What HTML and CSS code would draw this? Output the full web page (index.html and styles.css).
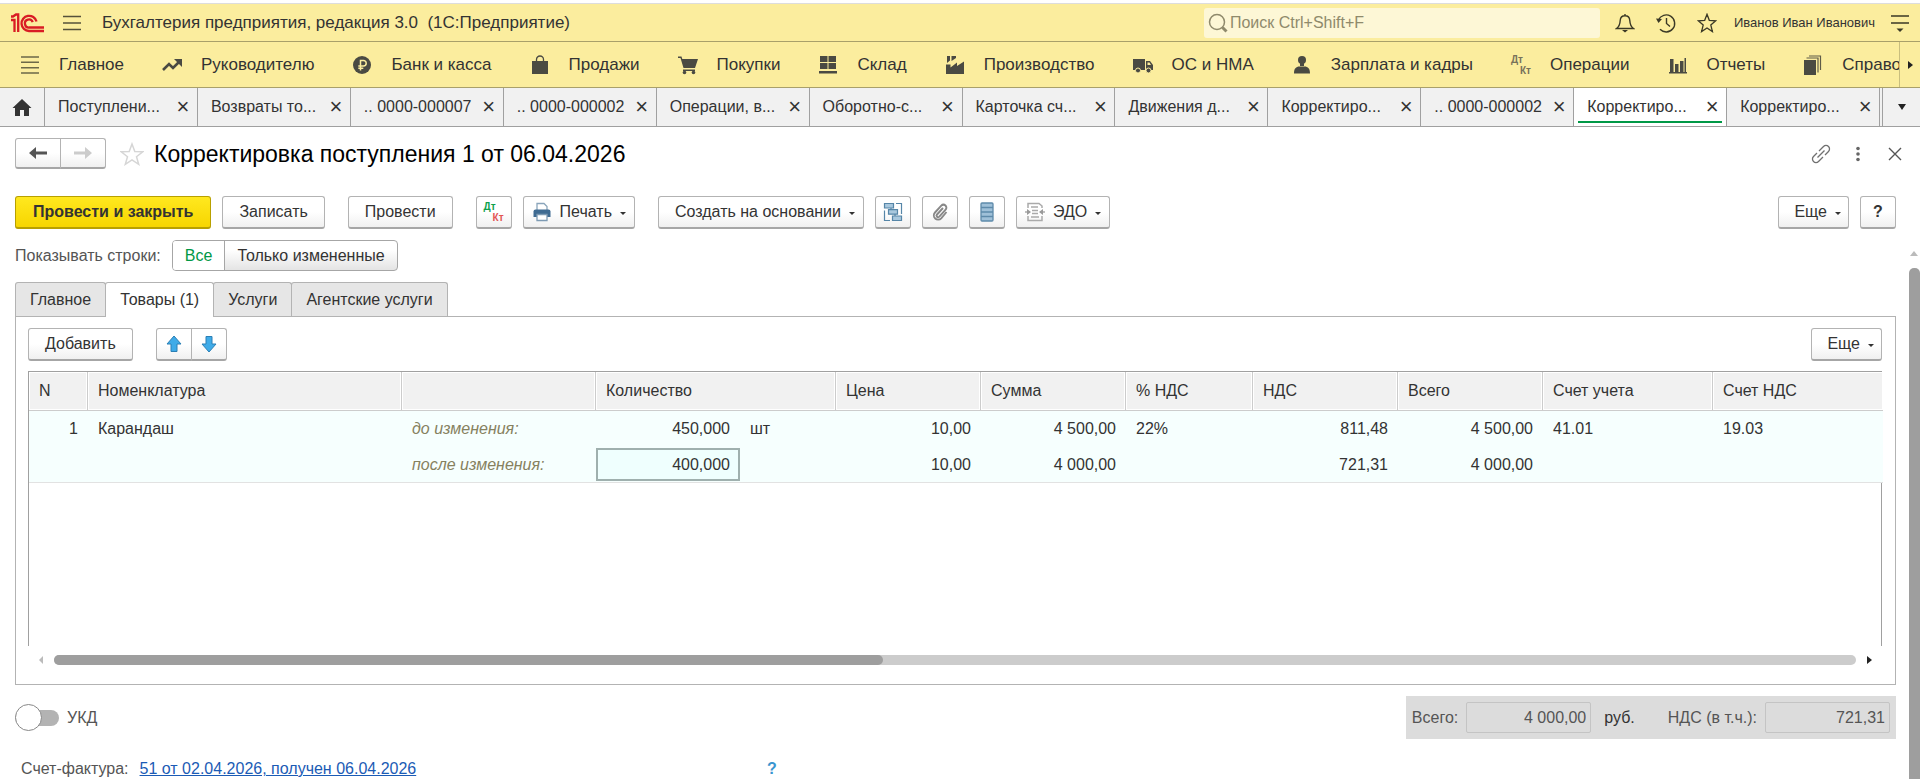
FILE: index.html
```html
<!DOCTYPE html>
<html lang="ru">
<head>
    <meta charset="UTF-8">
    <meta name="viewport" content="width=device-width, initial-scale=1.0">
    <title>Корректировка поступления 1 от 06.04.2026</title>
    <link rel="stylesheet" href="styles.css">
</head>
<body>
    <!-- Заголовок приложения -->
    <header class="topbar">
      <svg class="logo" viewBox="0 0 34 20" fill="none" stroke="#d91c24" stroke-width="2.300">
        <path d="M1 7h3.500v12M1 3.500h2l3-2h2.200V19" />
        <path d="M26.500 8.500a7.600 7.600 0 1 0-7.500 9.500H34" />
        <path d="M22.700 9.200a4 4 0 1 0-3.400 5.300H34" />
      </svg>
      <button class="icon-btn burger" aria-label="Меню">
        <svg viewBox="0 0 20 20" stroke="#55513a" stroke-width="1.600"><path d="M1 3.500h18M1 10h18M1 16.500h18" /></svg>
      </button>
      <span class="app-name">Бухгалтерия предприятия, редакция 3.0&nbsp; (1С:Предприятие)</span>
      <label class="search">
        <svg viewBox="0 0 20 20" fill="none" stroke="#8f8a6c" stroke-width="1.500"><circle cx="9" cy="9" r="7.500" /><path d="M14.500 14.500l4 4" stroke-width="3" /></svg>
        <input type="text" placeholder="Поиск Ctrl+Shift+F" aria-label="Поиск">
      </label>
      <div class="top-icons">
        <button class="icon-btn" aria-label="Уведомления">
          <svg viewBox="0 0 20 20" fill="none" stroke="#3b3926" stroke-width="1.400"><path d="M1.500 15.500c3-2 3.500-4 3.700-8C5.400 4.500 7.500 2.800 10 2.800s4.600 1.700 4.800 4.700c.2 4 .7 6 3.700 8zM10 1v2" /><path d="M7 17h6l-3 2.500z" fill="#3b3926" stroke="none" /></svg>
        </button>
        <button class="icon-btn" aria-label="История">
          <svg viewBox="0 0 20 20" fill="none" stroke="#3b3926" stroke-width="1.400"><path d="M2.400 7A8.500 8.500 0 1 1 4 16.300M10.500 5v5.500l3.500 3" /><path d="M0 5.500l6 .5-3.500 4z" fill="#3b3926" stroke="none" /></svg>
        </button>
        <button class="icon-btn" aria-label="Избранное">
          <svg viewBox="0 0 20 20" fill="none" stroke="#3b3926" stroke-width="1.300"><path d="M10 1.300l2.300 6 6.400.5-4.900 4.200 1.600 6.600-5.400-3.600-5.400 3.600L6.200 12 1.300 7.800l6.400-.5z" /></svg>
        </button>
      </div>
      <button class="user">Иванов Иван Иванович</button>
      <button class="icon-btn" aria-label="Сервис">
        <svg viewBox="0 0 20 20" stroke="#3b3926" stroke-width="1.500"><path d="M1 3h18M1 10h18" /><path d="M6.500 15.500h7L10 19z" fill="#3b3926" stroke="none" /></svg>
      </button>
    </header>

    <!-- Панель разделов -->
    <nav class="sections">
      <div class="sections-list">
        <a href="#"><svg viewBox="0 0 20 20" stroke="#6c6848" stroke-width="1.600"><path d="M1 2h18M1 7.300h18M1 12.700h18M1 18h18" /></svg>Главное</a>
        <a href="#"><svg viewBox="0 0 20 20"><path d="M1 15l6-6 4 4 6-6" fill="none" stroke="#4a4a42" stroke-width="2.600" /><path d="M12 4h8v8z" /></svg>Руководителю</a>
        <a href="#"><svg viewBox="0 0 20 20"><circle cx="10" cy="10" r="9" /><path d="M8.500 15.500V5.500h3a2.700 2.700 0 0 1 0 5.400H6.300M6.300 13.300h5" fill="none" stroke="#fbed9e" stroke-width="1.500" /></svg>Банк и касса</a>
        <a href="#"><svg viewBox="0 0 20 20"><path d="M2 6h16v13H2z" /><path d="M6.500 9V4.500a3.500 3.500 0 0 1 7 0V9" fill="none" stroke="#4a4a42" stroke-width="1.300" /></svg>Продажи</a>
        <a href="#"><svg viewBox="0 0 20 20"><path d="M0 1.500h3.500L4.300 4H20l-3 9H5.500L2.500 3H0z" /><path d="M5 14.500h12v1.500H5z" /><circle cx="6.500" cy="17.500" r="1.800" /><circle cx="15.500" cy="17.500" r="1.800" /></svg>Покупки</a>
        <a href="#"><svg viewBox="0 0 20 20"><path d="M2 1h7.500v6H2zM10.500 1H18v6h-7.500zM2 8h7.500v6H2zM10.500 8H18v6h-7.500zM1 16h18v2.500H1z" /></svg>Склад</a>
        <a href="#"><svg viewBox="0 0 20 20"><path d="M1 19V9.500h4.500v3L12 7.500v3.500L19 6.500V19zM2 1h3v4.500L2 8zM6.500 1h4.500v2L6.500 6z" /></svg>Производство</a>
        <a href="#"><svg viewBox="0 0 20 20"><path d="M0 4h12v11H0zM13 6h4l3 4v5h-7z" /><path d="M14.500 7.500h2l1.500 2.500h-3.500z" fill="#fbed9e" /><circle cx="5" cy="15.500" r="2.500" stroke="#fbed9e" /><circle cx="15.500" cy="15.500" r="2.500" stroke="#fbed9e" /></svg>ОС и НМА</a>
        <a href="#"><svg viewBox="0 0 20 20"><circle cx="10" cy="5" r="4" /><path d="M8 8h4v3H8zM2 18.500c0-5 2-7 5.500-7h5c3.500 0 5.500 2 5.500 7z" /></svg>Зарплата и кадры</a>
        <a href="#"><span class="dtkt"><b>Дт</b><b>Кт</b></span>Операции</a>
        <a href="#"><svg viewBox="0 0 20 20"><path d="M2 4h3.500v13H2zM7 9h3.500v8H7zM12 6h3.500v11H12zM16.500 3H18v14h-1.500zM1 17h18v1.500H1z" /></svg>Отчеты</a>
        <a href="#"><svg viewBox="0 0 20 20"><path d="M1 5h12v15H1z" /><path d="M3.500 3h11.500v14.500M6 1h11.500v14" fill="none" stroke="#5f5c48" stroke-width="1.200" /></svg>Справочники</a>
      </div>
      <button class="sections-next" aria-label="Далее"><i class="arrow-right"></i></button>
    </nav>

    <!-- Открытые окна -->
    <div class="windows">
      <button class="home" aria-label="Начальная страница">
        <svg viewBox="0 0 20 20" fill="#333"><path d="M10 2l9.500 9H17v8h-5v-6H8v6H3v-8H.5z" /></svg>
      </button>
      <div class="window"><a href="#">Поступлени...</a><button aria-label="Закрыть">×</button></div>
      <div class="window"><a href="#">Возвраты то...</a><button aria-label="Закрыть">×</button></div>
      <div class="window"><a href="#">.. 0000-000007</a><button aria-label="Закрыть">×</button></div>
      <div class="window"><a href="#">.. 0000-000002</a><button aria-label="Закрыть">×</button></div>
      <div class="window"><a href="#">Операции, в...</a><button aria-label="Закрыть">×</button></div>
      <div class="window"><a href="#">Оборотно-с...</a><button aria-label="Закрыть">×</button></div>
      <div class="window"><a href="#">Карточка сч...</a><button aria-label="Закрыть">×</button></div>
      <div class="window"><a href="#">Движения д...</a><button aria-label="Закрыть">×</button></div>
      <div class="window"><a href="#">Корректиро...</a><button aria-label="Закрыть">×</button></div>
      <div class="window"><a href="#">.. 0000-000002</a><button aria-label="Закрыть">×</button></div>
      <div class="window active"><a href="#">Корректиро...</a><button aria-label="Закрыть">×</button></div>
      <div class="window"><a href="#">Корректиро...</a><button aria-label="Закрыть">×</button></div>
      <button class="windows-more" aria-label="Все окна"><i class="arrow-down"></i></button>
    </div>

    <main class="form">
      <div class="form-head">
        <div class="btn-group">
          <button class="btn" aria-label="Назад"><svg viewBox="0 0 20 20" fill="#555"><path d="M1 10l7-6v4.500h11v3H8V16z" /></svg></button>
          <button class="btn" aria-label="Вперед"><svg viewBox="0 0 20 20" fill="#ccc"><path d="M19 10l-7-6v4.500H1v3h11V16z" /></svg></button>
        </div>
        <button class="icon-btn favorite" aria-label="В избранное">
          <svg viewBox="0 0 24 24" fill="none" stroke="#d6d6d6" stroke-width="1.500"><path d="M12 2l2.800 7.500 8 .3-6.300 4.900 2.200 7.600L12 17.900l-6.700 4.400 2.200-7.600L1.200 9.800l8-.3z" /></svg>
        </button>
        <h1>Корректировка поступления 1 от 06.04.2026</h1>
        <div class="head-icons">
          <button class="icon-btn" aria-label="Ссылка">
            <svg viewBox="0 0 20 20" fill="none" stroke="#707070" stroke-width="1.300"><path d="M8 7l4.500-4.500a3.500 3.500 0 0 1 5 5L14 11M12 13l-4.500 4.500a3.500 3.500 0 0 1-5-5L6 9M6.500 13.500l7-7" /></svg>
          </button>
          <button class="icon-btn" aria-label="Еще">
            <svg viewBox="0 0 20 20" fill="#666"><circle cx="10" cy="4.500" r="1.800" /><circle cx="10" cy="10" r="1.800" /><circle cx="10" cy="15.500" r="1.800" /></svg>
          </button>
          <button class="icon-btn" aria-label="Закрыть">
            <svg viewBox="0 0 20 20" stroke="#555" stroke-width="1.400"><path d="M4 4l12 12M16 4L4 16" /></svg>
          </button>
        </div>
      </div>

      <div class="toolbar">
        <button class="btn primary">Провести и закрыть</button>
        <button class="btn">Записать</button>
        <button class="btn gap">Провести</button>
        <button class="btn square gap" aria-label="Дт Кт"><span class="dtkt color"><b>Дт</b><b>Кт</b></span></button>
        <button class="btn with-icon">
          <svg viewBox="0 0 20 20"><path d="M5 8V1.500h7l3 3V8" fill="#fff" stroke="#8aa5bb" stroke-width="1.300" /><path d="M3.500 7.500h13q2 0 2 2V15h-17V9.500q0-2 2-2z" fill="#3f6b92" /><path d="M5 12.500h10v6H5z" fill="#fff" stroke="#7d9ab3" stroke-width="1.300" /></svg>
          Печать<i class="caret"></i>
        </button>
        <button class="btn gap">Создать на основании<i class="caret"></i></button>
        <button class="btn square" aria-label="Структура подчиненности">
          <svg viewBox="0 0 20 20" fill="#a9c8de" stroke="#5686a8" stroke-width="1.200"><path d="M1.500 1.500h9v4.500h-9zM5.500 7.700h9v4.500h-9zM9.500 14h9v4.500h-9z" /><path d="M13 1.500h5.500V12M1.500 8.500v10H7M8 6v1.500M12 12v2" fill="none" /></svg>
        </button>
        <button class="btn square" aria-label="Присоединенные файлы">
          <svg viewBox="0 0 20 20" fill="none" stroke="#888" stroke-width="1.900"><path d="M13 6l-6 6.500a1.500 1.500 0 0 0 2.300 2.200l6.300-7a2.900 2.900 0 0 0-4.300-4L5 10.500a4.200 4.200 0 0 0 6.200 5.800L16.500 10" /></svg>
        </button>
        <button class="btn square" aria-label="Реестр">
          <svg viewBox="0 0 20 20" fill="#9fc0d8" stroke="#5e8aaa" stroke-width="1.300"><rect x="4" y="1" width="12" height="18" rx="1" /><path d="M4 5.500h12M4 10h12M4 14.500h12" /></svg>
        </button>
        <button class="btn with-icon">
          <svg viewBox="0 0 20 20" fill="none" stroke="#aaa" stroke-width="1.500"><path d="M3 6V1.500h11l3 2.500v2M3 14v4.500h14V14M6 5h7M7 8.500h6M7 11.500h6M6 15h8M0 10h4M16 10h4" /><path d="M2 7v6l4-3zM18 7v6l-4-3z" fill="#999" stroke="none" /></svg>
          ЭДО<i class="caret"></i>
        </button>
        <button class="btn more">Еще<i class="caret"></i></button>
        <button class="btn square help">?</button>
      </div>

      <div class="form-body">
        <div class="content">
          <div class="rows-filter">
            <span>Показывать строки:</span>
            <div class="switch">
              <input type="radio" name="rows" id="rowsAll" checked>
              <label for="rowsAll">Все</label>
              <input type="radio" name="rows" id="rowsChanged">
              <label for="rowsChanged">Только измененные</label>
            </div>
          </div>

          <div class="tabs" role="tablist">
            <button role="tab">Главное</button>
            <button role="tab" class="active" aria-selected="true">Товары (1)</button>
            <button role="tab">Услуги</button>
            <button role="tab">Агентские услуги</button>
          </div>

          <section class="panel">
            <div class="panel-bar">
              <button class="btn">Добавить</button>
              <div class="btn-group">
                <button class="btn" aria-label="Вверх"><svg viewBox="0 0 20 20" fill="#3fabe8" stroke="#2b7fb5"><path d="M10 2l7 8h-4v7.500H7V10H3z" /></svg></button>
                <button class="btn" aria-label="Вниз"><svg viewBox="0 0 20 20" fill="#3fabe8" stroke="#2b7fb5"><path d="M10 18l7-8h-4V2.500H7V10H3z" /></svg></button>
              </div>
              <button class="btn more">Еще<i class="caret"></i></button>
            </div>

            <div class="grid">
              <table>
                <colgroup>
                  <col class="c-n"><col class="c-name"><col class="c-kind"><col class="c-qty"><col class="c-unit">
                  <col class="c-sum"><col class="c-sum"><col class="c-rate"><col class="c-sum"><col class="c-sum">
                  <col class="c-acc"><col class="c-acc">
                </colgroup>
                <thead>
                  <tr>
                    <th>N</th>
                    <th>Номенклатура</th>
                    <th></th>
                    <th colspan="2">Количество</th>
                    <th>Цена</th>
                    <th>Сумма</th>
                    <th>% НДС</th>
                    <th>НДС</th>
                    <th>Всего</th>
                    <th>Счет учета</th>
                    <th>Счет НДС</th>
                  </tr>
                </thead>
                <tbody>
                  <tr>
                    <td class="num">1</td>
                    <td>Карандаш</td>
                    <td class="kind">до изменения:</td>
                    <td class="num">450,000</td>
                    <td>шт</td>
                    <td class="num">10,00</td>
                    <td class="num">4 500,00</td>
                    <td>22%</td>
                    <td class="num">811,48</td>
                    <td class="num">4 500,00</td>
                    <td>41.01</td>
                    <td>19.03</td>
                  </tr>
                  <tr class="after">
                    <td></td>
                    <td></td>
                    <td class="kind">после изменения:</td>
                    <td class="edit"><input type="text" value="400,000" aria-label="Количество после изменения"></td>
                    <td></td>
                    <td class="num">10,00</td>
                    <td class="num">4 000,00</td>
                    <td></td>
                    <td class="num">721,31</td>
                    <td class="num">4 000,00</td>
                    <td></td>
                    <td></td>
                  </tr>
                </tbody>
              </table>
            </div>

            <div class="hscroll">
              <i class="arrow-left"></i>
              <div class="track"><div class="thumb"></div></div>
              <i class="arrow-right"></i>
            </div>
          </section>

          <div class="summary">
            <label class="toggle"><input type="checkbox">УКД</label>
            <div class="totals">
              <label for="total">Всего:</label>
              <input type="text" id="total" value="4 000,00" readonly>
              <span class="currency">руб.</span>
              <label for="vat">НДС (в т.ч.):</label>
              <input type="text" id="vat" value="721,31" readonly>
            </div>
          </div>

          <div class="invoice">
            <div class="invoice-link">
              <span>Счет-фактура:</span>
              <a href="#">51 от 02.04.2026, получен 06.04.2026</a>
            </div>
            <button class="hint" aria-label="Справка">?</button>
          </div>
        </div>

        <div class="vscroll">
          <i class="arrow-up"></i>
          <div class="thumb"></div>
        </div>
      </div>
    </main>
</body>
</html>
```
FILE: styles.css
```css
* {
  margin: 0;
  padding: 0;
  box-sizing: border-box;
}
body {
  display: flex;
  flex-direction: column;
  height: 100vh;
  overflow: hidden;
  padding-top: 3px;
  background: #fff;
  color: #333;
  font: 16px/20px "Liberation Sans", Arial, sans-serif;
}
button,
input {
  font: inherit;
  color: inherit;
}
button {
  border: none;
  background: none;
  cursor: pointer;
}
a {
  color: inherit;
  text-decoration: none;
}
svg {
  display: block;
  flex: none;
  width: 20px;
  height: 20px;
}
.icon-btn {
  flex: none;
}

/* стрелки */
.arrow-right,
.arrow-left,
.arrow-up,
.arrow-down,
.caret {
  flex: none;
  width: 0;
  height: 0;
  border: 4px solid transparent;
}
.arrow-right {
  border-left: 5px solid #222;
  border-right-width: 0;
}
.arrow-left {
  border-right-color: #bbb;
  border-left-width: 0;
}
.arrow-up {
  border-bottom: 5px solid #bbb;
  border-top-width: 0;
}
.arrow-down {
  border-top: 6px solid #222;
  border-bottom-width: 0;
}
.caret {
  border-width: 3px 3px 0;
  border-top-color: #333;
}

/* заголовок */
.topbar {
  display: flex;
  align-items: center;
  flex: none;
  height: 39px;
  padding: 0 10px;
  border-top: 1px solid #ddd;
  border-bottom: 1px solid #a9a06a;
  background: #fbed9e;
}
.topbar .logo {
  width: 34px;
}
.topbar .burger {
  margin: 0 20px 0 18px;
}
.app-name {
  flex: 1;
  font-size: 17px;
  white-space: nowrap;
}
.search {
  display: flex;
  align-items: center;
  width: 396px;
  height: 30px;
  padding-left: 4px;
  border-radius: 3px;
  background: #fdf7d6;
}
.search input {
  flex: 1;
  padding-left: 2px;
  border: none;
  outline: none;
  background: none;
}
.search input::placeholder {
  color: #8f8a6c;
  opacity: 1;
}
.top-icons {
  display: flex;
  gap: 21px;
  padding: 0 17px 0 15px;
}
.user {
  margin-right: 15px;
  font-size: 13px;
  white-space: nowrap;
}

/* разделы */
.sections {
  display: flex;
  flex: none;
  height: 46px;
  border-bottom: 1px solid #a9a06a;
  background: #fbed9e;
}
.sections-list {
  display: flex;
  flex: 1;
  gap: 38px;
  min-width: 0;
  padding-left: 20px;
  overflow: hidden;
}
.sections-list a {
  display: flex;
  align-items: center;
  gap: 19px;
  font-size: 17px;
  white-space: nowrap;
}
.sections-list svg {
  fill: #4a4a42;
}
.sections-next {
  display: flex;
  align-items: center;
  justify-content: center;
  width: 21px;
  border-left: 1px solid #c9be7e;
}
.dtkt {
  display: flex;
  flex-direction: column;
  width: 20px;
  color: #77725a;
  font-size: 10px;
  line-height: 11px;
  text-align: left;
}
.dtkt b:last-child {
  align-self: flex-end;
}
.dtkt.color b:first-child {
  color: #0da04c;
}
.dtkt.color b:last-child {
  color: #e25555;
}

/* окна */
.windows {
  display: flex;
  flex: none;
  height: 39px;
  border-bottom: 1px solid #a0a0a0;
  background: #f1f1f1;
}
.home {
  display: flex;
  align-items: center;
  justify-content: center;
  width: 45px;
  border-right: 1px solid #a0a0a0;
}
.window {
  display: flex;
  align-items: center;
  justify-content: space-between;
  flex: 1;
  min-width: 0;
  padding: 0 6px 1px 13px;
  border-right: 1px solid #a0a0a0;
  white-space: nowrap;
}
.window button {
  width: 16px;
  font-size: 22px;
}
.window.active {
  background: #fff linear-gradient(#009846, #009846) center bottom 3px / calc(100% - 8px) 2px no-repeat;
}
.windows-more {
  display: flex;
  align-items: center;
  justify-content: center;
  width: 38px;
  margin-left: 2px;
  border-left: 1px solid #a0a0a0;
}

/* форма */
.form {
  display: flex;
  flex-direction: column;
  flex: 1;
  min-height: 0;
  padding: 11px 0 0 15px;
}
.form-head {
  display: flex;
  align-items: center;
  flex: none;
  padding-right: 15px;
}
.form-head .btn {
  width: 46px;
  height: 31px;
}
.form-head .favorite {
  margin: 0 10px 0 14px;
}
.favorite svg {
  width: 24px;
  height: 24px;
}
h1 {
  flex: 1;
  color: #000;
  font-size: 23px;
  font-weight: normal;
  line-height: 28px;
}
.head-icons {
  display: flex;
  gap: 17px;
}
.btn {
  display: flex;
  align-items: center;
  justify-content: center;
  flex: none;
  height: 33px;
  padding: 0 16px;
  border: 1px solid #b3b3b3;
  border-bottom: 2px solid #a6a6a6;
  border-radius: 3px;
  background: linear-gradient(#fff 50%, #f0f0f0);
  white-space: nowrap;
}
.btn .caret {
  margin: 2px -8px 0 8px;
}
.btn.primary {
  padding: 0 17px;
  border-color: #b8a000;
  background: linear-gradient(#ffe81f, #f7d600);
  font-weight: bold;
}
.btn.square {
  width: 36px;
  padding: 0;
}
.btn.with-icon {
  gap: 8px;
  padding: 0 8px;
}
.btn.with-icon .caret {
  margin: 2px 0 0;
}
.btn.help {
  font-weight: bold;
}
.btn.more {
  margin-left: auto;
  padding: 0 15px;
}
.btn-group {
  display: flex;
}
.btn-group .btn {
  padding: 0;
}
.panel-bar .btn-group .btn {
  width: 36px;
}
.btn-group .btn:first-child {
  border-radius: 3px 0 0 3px;
}
.btn-group .btn:last-child {
  margin-left: -1px;
  border-radius: 0 3px 3px 0;
}
.toolbar {
  display: flex;
  flex: none;
  gap: 11px;
  padding: 27px 24px 11px 0;
}
.toolbar .gap {
  margin-left: 12px;
}
.form-body {
  display: flex;
  flex: 1;
  min-height: 0;
}
.content {
  flex: 1;
  min-width: 0;
  overflow: hidden;
}

.rows-filter {
  display: flex;
  align-items: center;
  gap: 11px;
  color: #555;
}
.switch {
  display: flex;
  height: 31px;
  border: 1px solid #a6a6a6;
  border-radius: 4px;
  background: linear-gradient(#fff 30%, #e4e4e4);
  color: #333;
  overflow: hidden;
}
.switch input {
  appearance: none;
}
.switch label {
  padding: 5px 12px;
  cursor: pointer;
}
.switch label + input + label {
  border-left: 1px solid #a6a6a6;
}
.switch input:checked + label {
  background: #fff;
  color: #009846;
}

.tabs {
  display: flex;
  margin-top: 11px;
}
.tabs button {
  height: 34px;
  padding: 0 14px;
  border: 1px solid #b3b3b3;
  border-bottom: none;
  border-radius: 3px 3px 0 0;
  background: #e6e6e6;
}
.tabs button + button {
  margin-left: -1px;
}
.tabs .active {
  position: relative;
  height: 35px;
  margin-bottom: -1px;
  background: #fff;
}

.panel {
  margin-right: 12px;
  padding: 11px 13px 10px 12px;
  border: 1px solid #b3b3b3;
}
.panel-bar {
  display: flex;
  gap: 23px;
}
.grid {
  height: 275px;
  margin-top: 10px;
  border: 1px solid #a0a0a0;
  border-bottom: none;
}
table {
  width: 100%;
  table-layout: fixed;
  border-collapse: separate;
  border-spacing: 0;
}
.c-n { width: 59px; }
.c-name { width: 314px; }
.c-kind { width: 194px; }
.c-qty { width: 144px; }
.c-unit { width: 96px; }
.c-sum { width: 145px; }
.c-rate { width: 127px; }
.c-acc { width: 170px; }
th,
td {
  padding: 0 10px;
  text-align: left;
  white-space: nowrap;
}
th {
  height: 39px;
  border-right: 1px solid #ccc;
  border-bottom: 1px solid #ccc;
  background: #f1f1f1;
  box-shadow: inset 0 0 0 1px #fff;
  font-weight: normal;
}
th:last-child {
  border-right: none;
}
td {
  height: 36px;
  background: #f6fffe;
}
.after td {
  border-bottom: 1px solid #e2e2e2;
}
td.num {
  text-align: right;
}
.kind {
  color: #86815f;
  font-style: italic;
}
td.edit {
  padding: 0;
}
.edit input {
  display: block;
  width: 100%;
  height: 33px;
  padding: 0 8px;
  border: 2px solid #9fb0ae;
  outline: none;
  background: #effffe;
  text-align: right;
}
.hscroll {
  display: flex;
  align-items: center;
  gap: 11px;
  height: 28px;
  padding: 0 10px 0 11px;
}
.hscroll .track {
  flex: 1;
  border-radius: 5px;
  background: #ccc;
}
.hscroll .thumb {
  width: 46%;
  height: 10px;
  border-radius: 5px;
  background: #9e9e9e;
}

.summary {
  display: flex;
  align-items: center;
  justify-content: space-between;
  margin: 11px 12px 0 0;
}
.toggle {
  display: flex;
  align-items: center;
  gap: 8px;
  color: #555;
}
.toggle input {
  appearance: none;
  display: flex;
  align-items: center;
  width: 44px;
  height: 16px;
  border-radius: 8px;
  background: #b3b3b3;
}
.toggle input::before {
  content: "";
  width: 25px;
  height: 25px;
  border: 1px solid #888;
  border-radius: 50%;
  background: #fff;
}
.totals {
  display: flex;
  align-items: center;
  height: 43px;
  padding: 0 6px;
  background: #dcdcdc;
  color: #555;
}
.totals input {
  width: 125px;
  height: 31px;
  margin-left: 8px;
  padding: 0 4px;
  border: 1px solid #c4c4c4;
  border-radius: 2px;
  background: none;
  text-align: right;
}
.currency {
  margin: 0 33px 0 13px;
  color: #333;
}
.invoice {
  display: flex;
  margin-top: 20px;
  padding-left: 6px;
  color: #555;
}
.invoice-link {
  display: flex;
  gap: 11px;
  width: 746px;
}
.invoice a {
  color: #1b5bb5;
  text-decoration: underline;
}
.hint {
  color: #3a95cf;
  font-weight: bold;
}

.vscroll {
  display: flex;
  flex-direction: column;
  align-items: center;
  gap: 12px;
  width: 12px;
  padding-top: 11px;
}
.vscroll .thumb {
  flex: 1;
  width: 11px;
  border-radius: 5px 5px 0 0;
  background: #9e9e9e;
}
```
